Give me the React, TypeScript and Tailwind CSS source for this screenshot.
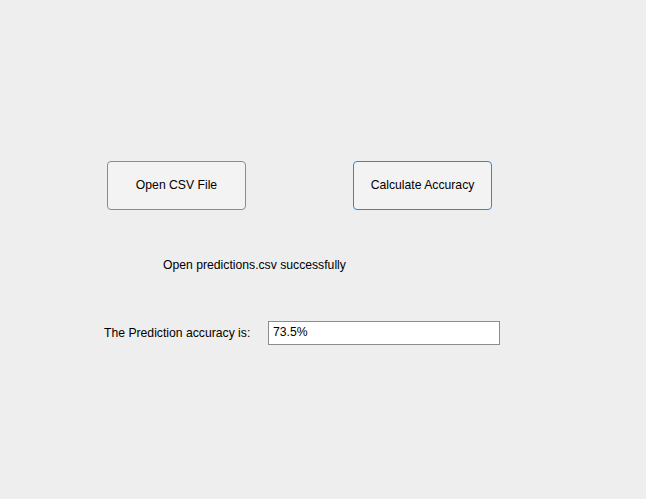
function App() {
	return (
		<div className="min-h-[499px] w-full bg-[#eeeeee] font-['Liberation_Sans',Arial,sans-serif] text-[12.2px] text-black">
			<div className="flex flex-col pt-[161px]">
				<div className="flex gap-[107px] pl-[107px]">
					<button className="w-[139px] h-[49px] rounded-[4px] border border-[#8c8c8c] bg-[#f3f3f3] pb-[1px] text-[12.2px]">
						Open CSV File
					</button>
					<button className="w-[139px] h-[49px] rounded-[4px] border border-[#3c82d2] bg-[#f3f3f3] pb-[1px] text-[12.2px]">
						Calculate Accuracy
					</button>
				</div>
				<p className="mt-[48px] pl-[163px] leading-[14px]">Open predictions.csv successfully</p>
				<div className="mt-[49px] flex items-center pl-[104px]">
					<span className="w-[164px] leading-[14px]">The Prediction accuracy is:</span>
					<div className="w-[232px] h-[24px] border border-[#8c8c8c] bg-white pl-[4px] pt-[3px] leading-[14px]">
						73.5%
					</div>
				</div>
			</div>
		</div>
	);
}

export default App;
